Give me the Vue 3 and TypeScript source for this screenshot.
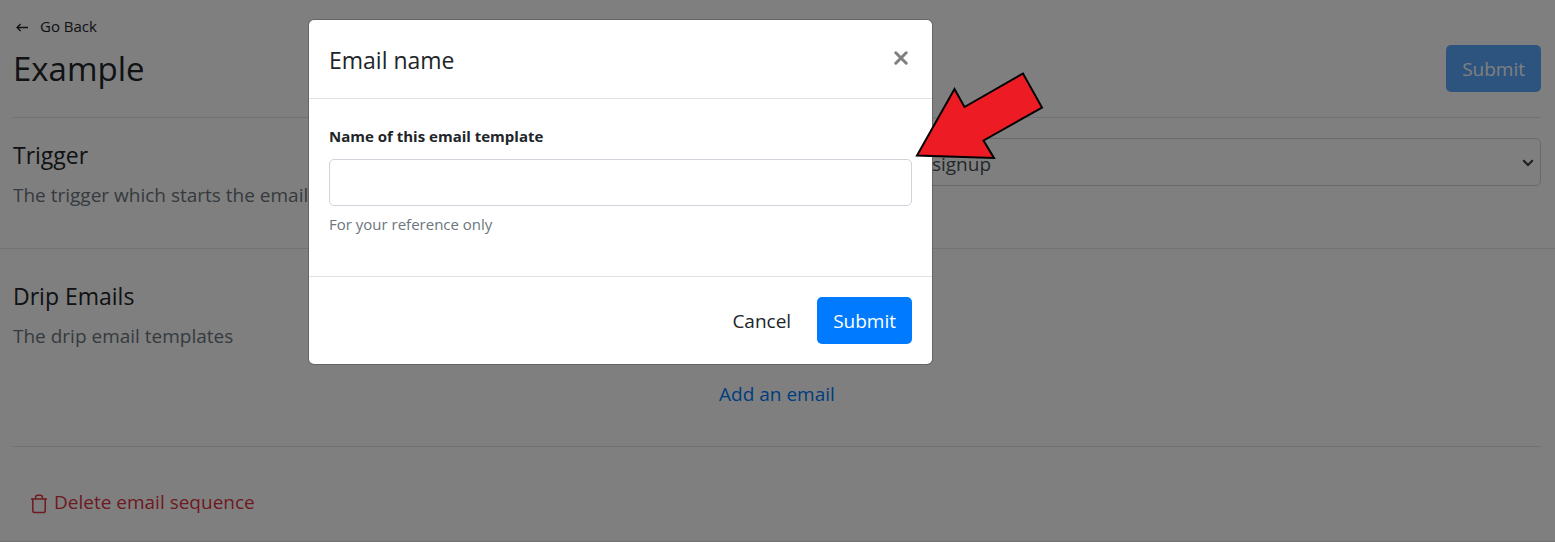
<script setup lang="ts">
import { ref } from 'vue'

const trigger = ref('signup')
const templateName = ref('')
</script>

<template>
  <div class="screen">
    <main class="page" inert>
      <header class="top">
        <div>
          <a class="back" href="#">
            <svg width="12" height="9" viewBox="0 0 12 9" aria-hidden="true">
              <path d="M12 4.5H1.2M4.6 1L1 4.5L4.6 8" fill="none" stroke="currentColor" stroke-width="1.3" />
            </svg>
            <span>Go Back</span>
          </a>
          <h1>Example</h1>
        </div>
        <button class="btn primary" type="button" disabled>Submit</button>
      </header>

      <section class="trigger">
        <div>
          <h2><label for="trigger">Trigger</label></h2>
          <p class="muted">The trigger which starts the email</p>
        </div>
        <div class="select-wrap">
          <select id="trigger" v-model="trigger">
            <option value="signup">signup</option>
          </select>
          <svg class="chevron" width="12" height="8" viewBox="0 0 12 8" aria-hidden="true">
            <path d="M1.2 1.2L6 6L10.8 1.2" fill="none" stroke="#343a40" stroke-width="2" />
          </svg>
        </div>
      </section>

      <section class="drip">
        <h2>Drip Emails</h2>
        <p class="muted">The drip email templates</p>
        <button class="add" type="button">Add an email</button>
      </section>

      <footer class="danger">
        <button class="delete" type="button">
          <svg width="16" height="20" viewBox="0 0 16 20" aria-hidden="true">
            <path
              d="M0 5H16M1.8 5V16.5Q1.8 18.6 3.8 18.6H12.2Q14.2 18.6 14.2 16.5V5M4.6 5V3.2Q4.6 1.2 6.6 1.2H9.4Q11.4 1.2 11.4 3.2V5"
              fill="none"
              stroke="currentColor"
              stroke-width="1.5"
            />
          </svg>
          <span>Delete email sequence</span>
        </button>
      </footer>
    </main>

    <div class="backdrop">
      <form class="modal" role="dialog" aria-modal="true" aria-labelledby="modal-title" @submit.prevent>
        <div class="modal-head">
          <h2 id="modal-title">Email name</h2>
          <button class="close" type="button" aria-label="Close">
            <svg width="14" height="14" viewBox="0 0 14 14" aria-hidden="true">
              <path d="M1.8 1.8L12.2 12.2M12.2 1.8L1.8 12.2" stroke="#7f7f7f" stroke-width="3" stroke-linecap="round" />
            </svg>
          </button>
        </div>
        <div class="modal-body">
          <label for="template-name">Name of this email template</label>
          <input id="template-name" v-model="templateName" type="text" aria-describedby="template-help" />
          <small id="template-help">For your reference only</small>
        </div>
        <div class="modal-foot">
          <button class="btn plain" type="button">Cancel</button>
          <button class="btn primary" type="submit">Submit</button>
        </div>
        <svg class="pointer" width="130" height="90" viewBox="0 0 130 90" aria-hidden="true">
          <path
            d="M3 85.5L40.5 19L50.5 37L109 3.5L128 37.5L69.5 70.5L80 88Z"
            fill="#ed1c24"
            stroke="#000"
            stroke-width="2"
          />
        </svg>
      </form>
    </div>
  </div>
</template>

<style>
body {
  margin: 0;
  background: #fff;
}
</style>

<style scoped>
* {
  box-sizing: border-box;
}
.screen {
  position: relative;
  min-height: 100vh;
  font-family: 'Open Sans', 'Noto Sans', sans-serif;
  font-size: 19px;
  line-height: 29px;
  color: #212529;
}
h1,
h2,
p {
  margin: 0;
  font-weight: 400;
}
h1 {
  font-size: 33px;
  line-height: 42px;
}
h2 {
  font-size: 23px;
  line-height: 30px;
}
button,
input,
select {
  font: inherit;
  color: inherit;
}
button {
  border: 0;
  background: none;
  padding: 0;
}
.page {
  min-height: 100vh;
  border-bottom: 1px solid #e5e5e5;
}
.top {
  display: flex;
  justify-content: space-between;
  align-items: flex-end;
  margin: 0 14px 0 13px;
  padding: 14px 0 25px;
  border-bottom: 1px solid #e5e5e5;
}
.top h1 {
  margin-top: 10px;
  padding-bottom: 2px;
}
.back {
  display: flex;
  align-items: center;
  gap: 12px;
  padding-left: 3px;
  font-size: 15px;
  line-height: 24px;
  color: inherit;
  text-decoration: none;
}
.back svg {
  margin-top: 3px;
}
.btn {
  height: 47px;
  padding: 2px 16px 0;
  border-radius: 5px;
}
.primary {
  background: #007bff;
  color: #fff;
}
.primary:disabled {
  opacity: 0.65;
}
.trigger {
  display: grid;
  grid-template-columns: 13fr 9fr;
  padding: 20px 14px 38px 13px;
  border-bottom: 1px solid #e5e5e5;
}
.muted {
  margin-top: 11px;
  color: #6c757d;
}
.trigger h2 {
  padding-top: 2px;
}
.select-wrap {
  position: relative;
}
select {
  display: block;
  width: 100%;
  height: 48px;
  padding: 4px 15px 0;
  appearance: none;
  color: #495057;
  background: #fff;
  border: 1px solid #ced4da;
  border-radius: 5px;
}
.chevron {
  position: absolute;
  right: 7px;
  top: 21px;
}
.drip {
  display: flex;
  flex-direction: column;
  margin: 0 14px 0 13px;
  padding: 32px 0 37px;
  border-bottom: 1px solid #e5e5e5;
}
.add {
  align-self: center;
  margin-top: 29px;
  color: #007bff;
}
.danger {
  padding: 41px 31px 20px;
}
.delete {
  display: flex;
  align-items: center;
  gap: 7px;
  color: #dc3545;
}
.delete svg {
  margin-top: 3px;
}
.backdrop {
  position: absolute;
  inset: 0;
  display: grid;
  grid-template-columns: 308fr 625px 622fr;
  align-items: start;
  padding-top: 19px;
  background: rgba(0, 0, 0, 0.5);
}
.modal {
  position: relative;
  grid-column: 2;
  background: #fff;
  background-clip: padding-box;
  border: 1px solid rgba(0, 0, 0, 0.2);
  border-radius: 6px;
}
.modal-head {
  display: flex;
  justify-content: space-between;
  align-items: center;
  padding: 25px 21px 23px 20px;
  border-bottom: 1px solid #dee2e6;
}
.close {
  display: flex;
  padding: 3px;
  margin-bottom: 4px;
}
.modal-body {
  display: flex;
  flex-direction: column;
  padding: 25px 20px 39px;
}
.modal-body label {
  font-size: 15px;
  line-height: 24px;
  font-weight: 700;
}
.modal-body input {
  height: 47px;
  margin: 11px 0 6px;
  padding: 0 16px;
  border: 1px solid #ced4da;
  border-radius: 5px;
}
.modal-body small {
  font-size: 15px;
  line-height: 25px;
  color: #6c757d;
}
.modal-foot {
  display: flex;
  justify-content: flex-end;
  gap: 10px;
  padding: 20px;
  border-top: 1px solid #dee2e6;
}
.pointer {
  position: absolute;
  left: 605px;
  top: 50px;
}
</style>
